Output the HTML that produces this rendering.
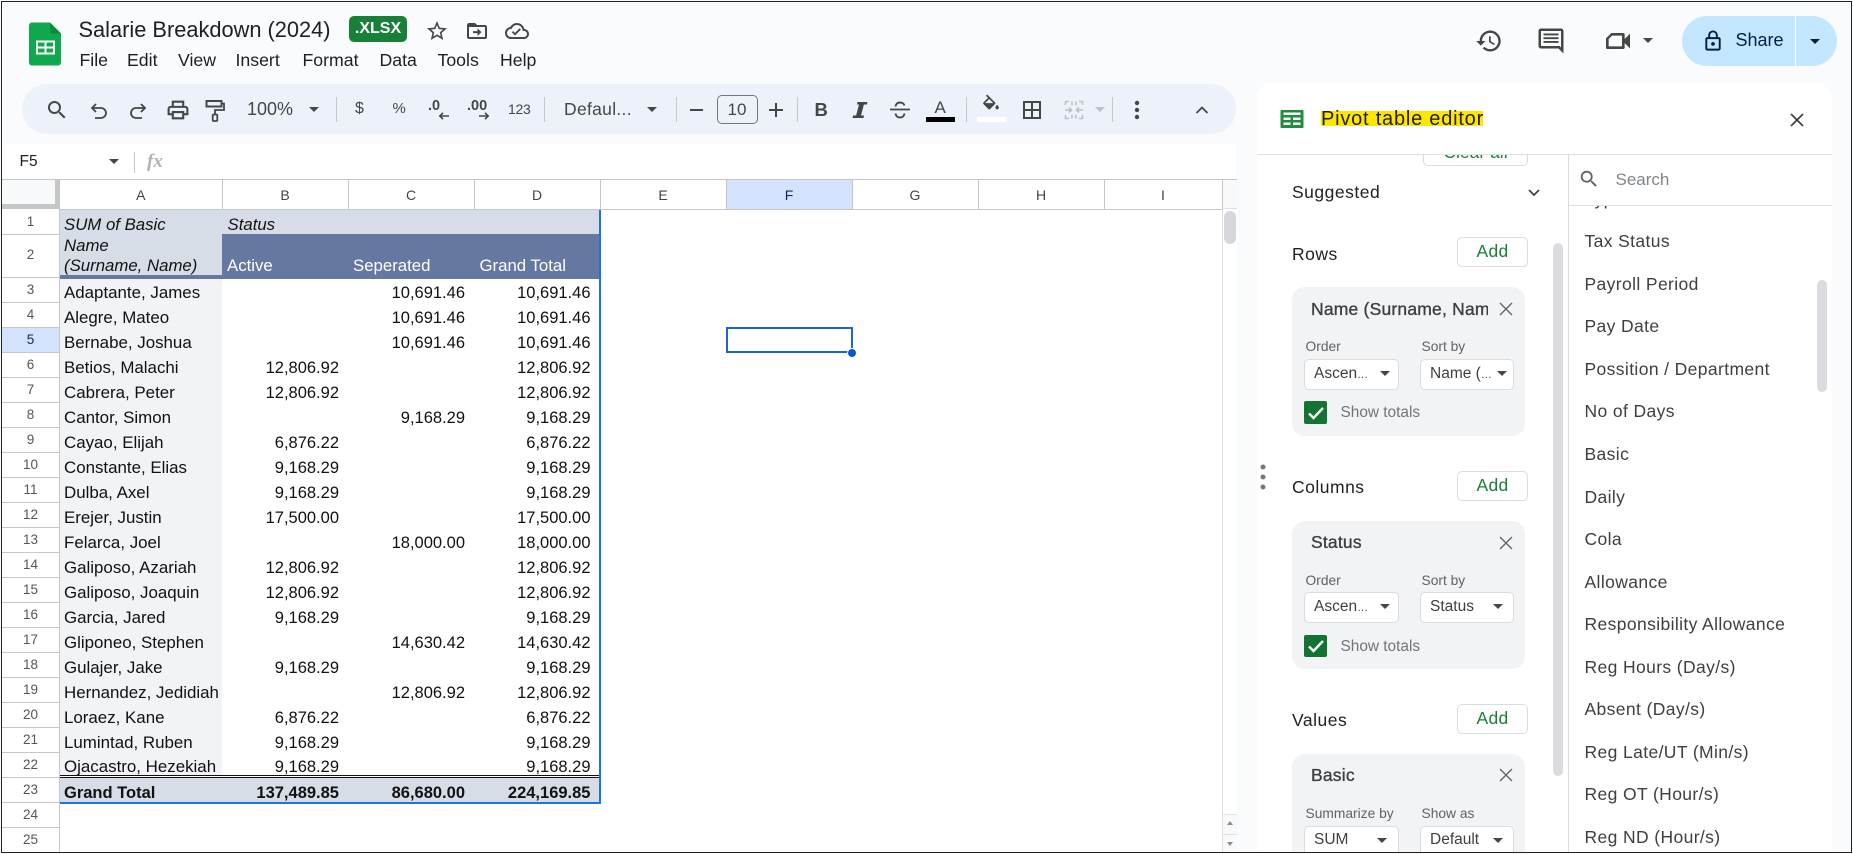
<!DOCTYPE html>
<html><head><meta charset="utf-8"><title>Salarie Breakdown (2024)</title>
<style>
*{box-sizing:border-box}
html,body{margin:0;padding:0;width:1853px;height:854px;overflow:hidden;background:#f9fbfd;font-family:"Liberation Sans",sans-serif;color:#1f1f1f}
.t{position:absolute;line-height:0;white-space:nowrap}
.box{position:absolute}
svg.i{position:absolute;transform:translate(-50%,-50%);fill:#444746;overflow:visible}
.m{font-size:17.7px;top:59.5px;color:#1f1f1f}
.tb{font-size:16.5px;top:109px;color:#444746}
.sep{position:absolute;width:1px;top:97px;height:25px;background:#c7c7c7}
.ch{position:absolute;top:179px;height:30.5px;border-right:1px solid #c7c7c7;border-top:1px solid #c7c7c7;border-bottom:1px solid #c7c7c7;text-align:center;font-size:14px;line-height:31px;color:#444}
.rn{position:absolute;left:2px;width:57px;border-bottom:1px solid #c7c7c7;text-align:center;font-size:13.5px;color:#555}
.rn span{display:block;position:relative;top:-1px}
.r{position:absolute;left:60px;width:540px;height:25px;font-size:16.5px;color:#111}
.r i{font-style:normal;position:absolute;top:15.4px;line-height:0;white-space:nowrap}
.r .a{left:4px;font-size:16.9px}.r .b{right:261px}.r .c{right:135px}.r .d{right:9.5px}
.add{position:absolute;left:1457px;width:71px;height:30px;background:#fff;border:1px solid #dadce0;border-radius:5px;color:#188038;font-size:17.5px;font-weight:500;text-align:center;line-height:26px;letter-spacing:.3px}
.sec{font-size:17.5px;left:1292px;color:#202124;letter-spacing:.5px}
.card{position:absolute;left:1292px;width:233px;background:#f1f3f4;border-radius:13px}
.ct{font-size:17.5px;left:1311px;color:#3c4043;-webkit-text-stroke:.35px #3c4043;letter-spacing:.2px}
.lb{font-size:13.8px;color:#5f6368}
.sel{position:absolute;height:31px;background:#fff;border:1px solid #dadce0;border-radius:5px}
.st{font-size:15.5px;color:#3c4043}
.st span{font-size:11px}
.ar{position:absolute;width:0;height:0;border-left:5.5px solid transparent;border-right:5.5px solid transparent;border-top:5.5px solid #444746}
.cb{position:absolute;left:1304px;width:23px;height:23px;background:#137333;border-radius:2px}
.li{font-size:17.5px;left:1584.5px;color:#3c4043;letter-spacing:.38px}
.hd{font-size:16.8px}
</style></head>
<body>

<!-- top bar -->
<svg class="i" style="left:44.5px;top:44px" width="32" height="43" viewBox="0 0 32 43"><path d="M3 0H21L32 11V40a3 3 0 0 1-3 3H3a3 3 0 0 1-3-3V3a3 3 0 0 1 3-3z" fill="#0fa84c"/><path d="M21 0L32 11H23a2 2 0 0 1-2-2z" fill="#0a8a3c"/><path d="M7 18h19v14H7z M9 20v4h6.500v-4z M17.500 20v4H24v-4z M9 26v4h6.500v-4z M17.500 26v4H24v-4z" fill="#fff" fill-rule="evenodd"/></svg>
<div class="t" style="left:78.5px;top:29.5px;font-size:21.8px;color:#1f1f1f">Salarie Breakdown (2024)</div>
<div class="box" style="left:349px;top:16px;width:58px;height:26px;background:#188038;border-radius:5px;color:#fff;font-size:16px;font-weight:bold;line-height:26px;text-align:center">.XLSX</div>
<svg class="i" style="left:437px;top:31px" width="24" height="24" viewBox="0 0 24 24"><path d="M22 9.240l-7.190-.62L12 2 9.190 8.630 2 9.240l5.460 4.730L5.820 21 12 17.270 18.180 21l-1.630-7.030L22 9.240zM12 15.400l-3.760 2.270 1-4.280-3.320-2.880 4.380-.38L12 6.100l1.710 4.040 4.380.38-3.320 2.880 1 4.280L12 15.400z"/></svg>
<svg class="i" style="left:477px;top:31px" width="24" height="24" viewBox="0 0 24 24"><path d="M20 6h-8l-2-2H4c-1.100 0-2 .9-2 2v12c0 1.100.9 2 2 2h16c1.100 0 2-.9 2-2V8c0-1.100-.9-2-2-2zm0 12H4V8h16v10z"/><path d="M12.500 17l4-3.900-4-3.900v2.900H8v2h4.500z"/></svg>
<svg class="i" style="left:517px;top:31px" width="24" height="24" viewBox="0 0 24 24"><path d="M19.350 10.040C18.670 6.590 15.640 4 12 4 9.110 4 6.600 5.640 5.350 8.040 2.340 8.360 0 10.910 0 14c0 3.310 2.690 6 6 6h13c2.760 0 5-2.240 5-5 0-2.640-2.050-4.780-4.650-4.960zM19 18H6c-2.210 0-4-1.790-4-4 0-2.050 1.530-3.760 3.560-3.970l1.070-.11.5-.95C8.080 7.140 9.940 6 12 6c2.620 0 4.880 1.860 5.390 4.430l.3 1.500 1.530.11c1.560.1 2.780 1.410 2.780 2.960 0 1.650-1.350 3-3 3z"/><path d="M10 16.500l-3.200-3.200 1.300-1.300 1.900 1.900 4.600-4.600 1.300 1.300z"/></svg>
<div class="t m" style="left:79.5px">File</div>
<div class="t m" style="left:127px">Edit</div>
<div class="t m" style="left:178px">View</div>
<div class="t m" style="left:235.5px">Insert</div>
<div class="t m" style="left:302.5px">Format</div>
<div class="t m" style="left:379.5px">Data</div>
<div class="t m" style="left:437.5px">Tools</div>
<div class="t m" style="left:500px">Help</div>

<svg class="i" style="left:1488.500px;top:40.500px" width="28" height="28" viewBox="0 0 24 24"><path d="M13 3c-4.970 0-9 4.030-9 9H1l3.890 3.890.07.14L9 12H6c0-3.870 3.130-7 7-7s7 3.130 7 7-3.130 7-7 7c-1.930 0-3.680-.79-4.940-2.060l-1.420 1.420C8.270 19.990 10.510 21 13 21c4.970 0 9-4.030 9-9s-4.030-9-9-9zm-1 5v5l4.280 2.540.72-1.210-3.500-2.080V8H12z"/></svg>
<svg class="i" style="left:1550.500px;top:41px" width="30" height="30" viewBox="0 0 24 24"><path d="M20 17.170L18.830 16H4V4h16v13.170zM20 2H4c-1.100 0-2 .9-2 2v12c0 1.100.9 2 2 2h14l4 4V4c0-1.100-.9-2-2-2z"/><path d="M6 12h12v1.500H6zM6 9h12v1.500H6zM6 6h12v1.500H6z"/></svg>
<svg class="i" style="left:1618px;top:41px" width="32" height="32" viewBox="0 0 24 24"><path d="M15 8v8H5V10.500L7.500 8h7.500m1-2H7L3 10v7c0 .55.45 1 1 1h12c.55 0 1-.45 1-1v-3.500l4 4v-11l-4 4V7c0-.55-.45-1-1-1z"/></svg>
<div class="ar" style="left:1643px;top:38px"></div>
<div class="box" style="left:1682px;top:16px;width:155px;height:50px;background:#c2e7ff;border-radius:25px"></div>
<div class="box" style="left:1795px;top:16px;width:1px;height:50px;background:#fff"></div>
<svg class="i" style="left:1713px;top:41px" width="23" height="23" viewBox="0 0 24 24"><path fill="#041e49" d="M18 8h-1V6c0-2.760-2.240-5-5-5S7 3.240 7 6v2H6c-1.100 0-2 .9-2 2v10c0 1.100.9 2 2 2h12c1.100 0 2-.9 2-2V10c0-1.100-.9-2-2-2zM9 6c0-1.660 1.340-3 3-3s3 1.340 3 3v2H9V6zm9 14H6V10h12v10zm-6-3c1.100 0 2-.9 2-2s-.9-2-2-2-2 .9-2 2 .9 2 2 2z"/></svg>
<div class="t" style="left:1735.500px;top:40px;font-size:18px;color:#041e49">Share</div>
<div class="ar" style="left:1810px;top:38.500px;border-top-color:#041e49"></div>

<!-- toolbar -->
<div class="box" style="left:22px;top:84px;width:1214px;height:50px;background:#edf2fa;border-radius:25px"></div>
<svg class="i" style="left:57px;top:110px" width="24" height="24" viewBox="0 0 24 24"><path d="M15.500 14h-.79l-.28-.27A6.471 6.471 0 0 0 16 9.500 6.500 6.500 0 1 0 9.500 16c1.610 0 3.090-.59 4.230-1.570l.27.28v.79l5 4.990L20.490 19l-4.990-5zm-6 0C7.010 14 5 11.990 5 9.500S7.010 5 9.500 5 14 7.010 14 9.500 11.990 14 9.500 14z"/></svg>
<svg class="i" style="left:98.500px;top:110.500px" width="20" height="20" viewBox="0 0 20 20"><path d="M7 3L3 7l4 4M3 7h9a4.500 4.500 0 0 1 0 10H6" fill="none" stroke="#444746" stroke-width="1.800"/></svg>
<svg class="i" style="left:137.500px;top:110.500px" width="20" height="20" viewBox="0 0 20 20"><path d="M13 3l4 4-4 4M17 7H8a4.500 4.500 0 0 0 0 10h6" fill="none" stroke="#444746" stroke-width="1.800"/></svg>
<svg class="i" style="left:177.500px;top:110px" width="25" height="25" viewBox="0 0 24 24"><path d="M19 8h-1V3H6v5H5c-1.660 0-3 1.340-3 3v6h4v4h12v-4h4v-6c0-1.660-1.340-3-3-3zM8 5h8v3H8V5zm8 12v2H8v-4h8v2zm2-2v-2H6v2H4v-4c0-.55.45-1 1-1h14c.55 0 1 .45 1 1v4h-2z"/></svg>
<svg class="i" style="left:215px;top:110.500px" width="20" height="22" viewBox="0 0 20 22"><rect x="1.500" y="1" width="15" height="5.500" fill="none" stroke="#444746" stroke-width="2"/><path d="M16.500 3.500h2.500v6.500H10v5" fill="none" stroke="#444746" stroke-width="1.800"/><rect x="7.700" y="14.500" width="4.600" height="6.500" rx="1" fill="none" stroke="#444746" stroke-width="1.800"/></svg>
<div class="t tb" style="left:247px;font-size:18px">100%</div>
<div class="ar" style="left:309px;top:107px"></div>
<div class="sep" style="left:336px"></div>
<div class="t tb" style="left:355px;font-size:16px">$</div>
<div class="t tb" style="left:392.500px;font-size:15px">%</div>
<div class="t" style="left:428px;top:106px;font-size:14.500px;font-weight:bold;color:#444746">.0</div>
<svg class="i" style="left:444px;top:116px" width="12" height="8" viewBox="0 0 12 8"><path d="M11 4H2M5 .8L1.800 4 5 7.200" fill="none" stroke="#444746" stroke-width="1.600"/></svg>
<div class="t" style="left:467px;top:106px;font-size:14.500px;font-weight:bold;color:#444746">.00</div>
<svg class="i" style="left:484px;top:116px" width="12" height="8" viewBox="0 0 12 8"><path d="M1 4h9M7 .8L10.200 4 7 7.200" fill="none" stroke="#444746" stroke-width="1.600"/></svg>
<div class="t tb" style="left:508px;font-size:14px;letter-spacing:-.3px">123</div>
<div class="sep" style="left:544px"></div>
<div class="t tb" style="left:564px;font-size:17.500px;letter-spacing:.3px">Defaul...</div>
<div class="ar" style="left:647px;top:107px"></div>
<div class="sep" style="left:676px"></div>
<div class="box" style="left:690px;top:108.500px;width:13px;height:2px;background:#444746"></div>
<div class="box" style="left:716.500px;top:94.500px;width:41px;height:29.500px;border:1px solid #747775;border-radius:5px;text-align:center;line-height:28px;font-size:17px;color:#444746">10</div>
<div class="box" style="left:769px;top:108.500px;width:14px;height:2px;background:#444746"></div>
<div class="box" style="left:775px;top:102.500px;width:2px;height:14px;background:#444746"></div>
<div class="sep" style="left:797px"></div>
<div class="t" style="left:814.500px;top:109.500px;font-size:18.500px;font-weight:bold;color:#444746">B</div>
<svg class="i" style="left:860px;top:109.500px" width="15" height="16" viewBox="0 0 15 16"><path d="M5 0h10l-.6 2.500h-3L8.500 13.500h3L11 16H0l.6-2.500h3L6.500 2.500h-2z"/></svg>
<svg class="i" style="left:900px;top:110px" width="22" height="20" viewBox="0 0 22 20"><path d="M6.500 6.500C7 3.500 9 2.500 11 2.500s4 1 4.500 3M6.500 13.500C7 16.500 9 17.500 11 17.500s4-1 4.500-4" fill="none" stroke="#444746" stroke-width="1.900"/><path d="M1 9.500h20" stroke="#444746" stroke-width="1.800"/></svg>
<div class="t" style="left:934.500px;top:107.500px;font-size:17px;color:#444746">A</div>
<div class="box" style="left:926px;top:117px;width:29px;height:5px;background:#000"></div>
<div class="sep" style="left:966px"></div>
<svg class="i" style="left:991px;top:104.500px" width="21" height="21" viewBox="0 0 24 24"><path d="M16.560 8.940L7.620 0 6.210 1.410l2.380 2.380-5.150 5.150c-.59.59-.59 1.540 0 2.120l5.500 5.500c.29.29.68.44 1.060.44s.77-.15 1.060-.44l5.500-5.500c.59-.58.59-1.530 0-2.120zM5.210 10L10 5.210 14.790 10H5.210zM19 11.500s-2 2.170-2 3.500c0 1.100.9 2 2 2s2-.9 2-2c0-1.330-2-3.500-2-3.500z"/><path d="M5 10h10l-5 5z"/></svg>
<div class="box" style="left:977px;top:117px;width:29px;height:5px;background:#fff"></div>
<svg class="i" style="left:1032px;top:110px" width="24" height="24" viewBox="0 0 24 24"><path d="M3 3v18h18V3H3zm8 16H5v-6h6v6zm0-8H5V5h6v6zm8 8h-6v-6h6v6zm0-8h-6V5h6v6z"/></svg>
<svg class="i" style="left:1074px;top:110px" width="20" height="20" viewBox="0 0 20 20"><path d="M5 1.500H1.500V5M1.500 15v3.500H5M15 1.500h3.500V5M18.500 15v3.500H15M1 10h6.500M5 7.500L7.500 10 5 12.500M19 10h-6.500M15 7.500L12.500 10l2.500 2.500M8 1.500v4M12 1.500v4M8 14.500v4M12 14.500v4" fill="none" stroke="#bdc1c6" stroke-width="1.600"/></svg>
<div class="ar" style="left:1094.500px;top:107px;border-top-color:#bdc1c6"></div>
<div class="sep" style="left:1112px"></div>
<svg class="i" style="left:1136.500px;top:109.700px" width="6" height="20" viewBox="0 0 6 20"><circle cx="3" cy="3" r="2.200"/><circle cx="3" cy="10" r="2.200"/><circle cx="3" cy="17" r="2.200"/></svg>
<svg class="i" style="left:1202px;top:110px" width="14" height="9" viewBox="0 0 14 9"><path d="M1.500 7.500L7 2l5.500 5.500" fill="none" stroke="#444746" stroke-width="1.800"/></svg>

<!-- formula bar -->
<div class="box" style="left:2px;top:144px;width:1234px;height:36px;background:#fff"></div>
<div class="t" style="left:19.500px;top:162px;font-size:15.500px;color:#1f1f1f">F5</div>
<div class="ar" style="left:108.500px;top:159px"></div>
<div class="box" style="left:134px;top:152px;width:1px;height:21px;background:#c7c7c7"></div>
<div class="t" style="left:147px;top:162px;font-size:19px;font-family:'Liberation Serif',serif;font-style:italic;font-weight:bold;color:#b0b3b6">fx</div>

<!-- grid -->
<div class="box" style="left:2px;top:179px;width:1235px;height:673px;background:#fff"></div>
<div class="box" style="left:2px;top:179px;width:53px;height:25px;background:#f8f9fa"></div>
<div class="box" style="left:2px;top:204px;width:58px;height:5px;background:#c4c7c5"></div>
<div class="box" style="left:55px;top:179px;width:5px;height:30px;background:#c4c7c5"></div>
<div class="box" style="left:2px;top:179px;width:1222px;height:1px;background:#c7c7c7"></div>

<div class="ch" style="left:60px;width:162.500px">A</div>
<div class="ch" style="left:222.500px;width:126px">B</div>
<div class="ch" style="left:348.500px;width:126px">C</div>
<div class="ch" style="left:474.500px;width:126px">D</div>
<div class="ch" style="left:600.500px;width:126px">E</div>
<div class="ch" style="left:726.500px;width:126px;background:#d3e3fd;color:#0b2b66">F</div>
<div class="ch" style="left:852.500px;width:126px">G</div>
<div class="ch" style="left:978.500px;width:126px">H</div>
<div class="ch" style="left:1104.500px;width:118px">I</div>
<div class="box" style="left:1223px;top:179px;width:14px;height:30px;background:#f8f9fa;border-top:1px solid #c7c7c7;border-bottom:1px solid #e0e0e0"></div>

<div class="box" style="left:59px;top:209px;width:1px;height:643px;background:#c7c7c7"></div>
<div class="rn" style="top:209.500px;height:25px;line-height:25px"><span>1</span></div>
<div class="rn" style="top:234.500px;height:43px;line-height:41px"><span>2</span></div>
<div class="rn" style="top:277.500px;height:25px;line-height:25px"><span>3</span></div>
<div class="rn" style="top:302.500px;height:25px;line-height:25px"><span>4</span></div>
<div class="rn" style="top:327.500px;height:25px;line-height:25px;background:#d3e3fd;color:#0b2b66"><span>5</span></div>
<div class="rn" style="top:352.500px;height:25px;line-height:25px"><span>6</span></div>
<div class="rn" style="top:377.500px;height:25px;line-height:25px"><span>7</span></div>
<div class="rn" style="top:402.500px;height:25px;line-height:25px"><span>8</span></div>
<div class="rn" style="top:427.500px;height:25px;line-height:25px"><span>9</span></div>
<div class="rn" style="top:452.500px;height:25px;line-height:25px"><span>10</span></div>
<div class="rn" style="top:477.500px;height:25px;line-height:25px"><span>11</span></div>
<div class="rn" style="top:502.500px;height:25px;line-height:25px"><span>12</span></div>
<div class="rn" style="top:527.500px;height:25px;line-height:25px"><span>13</span></div>
<div class="rn" style="top:552.500px;height:25px;line-height:25px"><span>14</span></div>
<div class="rn" style="top:577.500px;height:25px;line-height:25px"><span>15</span></div>
<div class="rn" style="top:602.500px;height:25px;line-height:25px"><span>16</span></div>
<div class="rn" style="top:627.500px;height:25px;line-height:25px"><span>17</span></div>
<div class="rn" style="top:652.500px;height:25px;line-height:25px"><span>18</span></div>
<div class="rn" style="top:677.500px;height:25px;line-height:25px"><span>19</span></div>
<div class="rn" style="top:702.500px;height:25px;line-height:25px"><span>20</span></div>
<div class="rn" style="top:727.500px;height:25px;line-height:25px"><span>21</span></div>
<div class="rn" style="top:752.500px;height:25px;line-height:25px"><span>22</span></div>
<div class="rn" style="top:777.500px;height:25px;line-height:25px"><span>23</span></div>
<div class="rn" style="top:802.500px;height:25px;line-height:25px"><span>24</span></div>
<div class="rn" style="top:827.500px;height:24.500px;line-height:25px;border-bottom:none"><span>25</span></div>

<!-- pivot fills -->
<div class="box" style="left:60px;top:210px;width:540px;height:24.500px;background:#d7dde7"></div>
<div class="box" style="left:60px;top:234px;width:162px;height:41px;background:#d7dde7"></div>
<div class="box" style="left:60px;top:275px;width:162px;height:4px;background:#6578a1"></div>
<div class="box" style="left:222px;top:234px;width:378px;height:45px;background:#6578a1"></div>
<div class="box" style="left:60px;top:279px;width:162px;height:496px;background:#f1f3f7"></div>
<div class="box" style="left:60px;top:778px;width:540px;height:24px;background:#d7dde7"></div>
<div class="box" style="left:60px;top:775px;width:540px;height:1px;background:#111"></div>
<div class="box" style="left:60px;top:777px;width:540px;height:1px;background:#111"></div>

<div class="t hd" style="left:64px;top:225.300px;font-style:italic;color:#111">SUM of Basic</div>
<div class="t hd" style="left:227.500px;top:225.300px;font-style:italic;color:#111">Status</div>
<div class="t hd" style="left:64px;top:246.300px;font-style:italic;color:#111">Name</div>
<div class="t hd" style="left:64px;top:266.300px;font-style:italic;color:#111">(Surname, Name)</div>
<div class="t hd" style="left:227px;top:266.300px;color:#fff">Active</div>
<div class="t hd" style="left:353px;top:266.300px;color:#fff">Seperated</div>
<div class="t hd" style="left:479.500px;top:266.300px;color:#fff">Grand Total</div>

<div class="r" style="top:277.300px"><i class="a">Adaptante, James</i><i class="c">10,691.46</i><i class="d">10,691.46</i></div>
<div class="r" style="top:302.300px"><i class="a">Alegre, Mateo</i><i class="c">10,691.46</i><i class="d">10,691.46</i></div>
<div class="r" style="top:327.300px"><i class="a">Bernabe, Joshua</i><i class="c">10,691.46</i><i class="d">10,691.46</i></div>
<div class="r" style="top:352.300px"><i class="a">Betios, Malachi</i><i class="b">12,806.92</i><i class="d">12,806.92</i></div>
<div class="r" style="top:377.300px"><i class="a">Cabrera, Peter</i><i class="b">12,806.92</i><i class="d">12,806.92</i></div>
<div class="r" style="top:402.300px"><i class="a">Cantor, Simon</i><i class="c">9,168.29</i><i class="d">9,168.29</i></div>
<div class="r" style="top:427.300px"><i class="a">Cayao, Elijah</i><i class="b">6,876.22</i><i class="d">6,876.22</i></div>
<div class="r" style="top:452.300px"><i class="a">Constante, Elias</i><i class="b">9,168.29</i><i class="d">9,168.29</i></div>
<div class="r" style="top:477.300px"><i class="a">Dulba, Axel</i><i class="b">9,168.29</i><i class="d">9,168.29</i></div>
<div class="r" style="top:502.300px"><i class="a">Erejer, Justin</i><i class="b">17,500.00</i><i class="d">17,500.00</i></div>
<div class="r" style="top:527.300px"><i class="a">Felarca, Joel</i><i class="c">18,000.00</i><i class="d">18,000.00</i></div>
<div class="r" style="top:552.300px"><i class="a">Galiposo, Azariah</i><i class="b">12,806.92</i><i class="d">12,806.92</i></div>
<div class="r" style="top:577.300px"><i class="a">Galiposo, Joaquin</i><i class="b">12,806.92</i><i class="d">12,806.92</i></div>
<div class="r" style="top:602.300px"><i class="a">Garcia, Jared</i><i class="b">9,168.29</i><i class="d">9,168.29</i></div>
<div class="r" style="top:627.300px"><i class="a">Gliponeo, Stephen</i><i class="c">14,630.42</i><i class="d">14,630.42</i></div>
<div class="r" style="top:652.300px"><i class="a">Gulajer, Jake</i><i class="b">9,168.29</i><i class="d">9,168.29</i></div>
<div class="r" style="top:677.300px"><i class="a">Hernandez, Jedidiah</i><i class="c">12,806.92</i><i class="d">12,806.92</i></div>
<div class="r" style="top:702.300px"><i class="a">Loraez, Kane</i><i class="b">6,876.22</i><i class="d">6,876.22</i></div>
<div class="r" style="top:727.300px"><i class="a">Lumintad, Ruben</i><i class="b">9,168.29</i><i class="d">9,168.29</i></div>
<div class="r" style="top:751.300px"><i class="a">Ojacastro, Hezekiah</i><i class="b">9,168.29</i><i class="d">9,168.29</i></div>
<div class="r" style="top:777.300px;font-weight:bold"><i class="a" style="font-size:16.500px">Grand Total</i><i class="b">137,489.85</i><i class="c">86,680.00</i><i class="d">224,169.85</i></div>

<!-- selection -->
<div class="box" style="left:599px;top:210px;width:2px;height:594px;background:#1a73e8"></div>
<div class="box" style="left:60px;top:802px;width:541px;height:2px;background:#1a73e8"></div>
<div class="box" style="left:726px;top:327px;width:126.500px;height:26px;border:2px solid #1a66d4"></div>
<div class="box" style="left:847px;top:348px;width:10px;height:10px;border-radius:50%;background:#0b57d0;border:1px solid #fff"></div>

<!-- sheet scrollbar -->
<div class="box" style="left:1222px;top:209px;width:1px;height:643px;background:#e0e0e0"></div>
<div class="box" style="left:1224px;top:211px;width:12px;height:33px;border-radius:6px;background:#d5d7dc"></div>
<div class="box" style="left:1223px;top:814px;width:14px;height:38px;background:#f8f9fa;border-top:1px solid #e4e4e4"></div>
<div class="box" style="left:1223px;top:834px;width:14px;height:1px;background:#e0e0e0"></div>
<div class="box" style="left:1226.500px;top:821px;width:0;height:0;border-left:3.500px solid transparent;border-right:3.500px solid transparent;border-bottom:4px solid #8a8a8a"></div>
<div class="box" style="left:1226.500px;top:842px;width:0;height:0;border-left:3.500px solid transparent;border-right:3.500px solid transparent;border-top:4px solid #8a8a8a"></div>

<!-- side panel -->
<div class="box" style="left:1256.500px;top:83px;width:575px;height:769px;background:#fff;border-radius:16px 16px 0 0"></div>
<svg class="i" style="left:1292px;top:119px" width="23" height="18" viewBox="0 0 23 18"><rect width="23" height="18" rx="1" fill="#1e8e3e"/><path d="M3 2.500h17v2.500H3zM3 7.500h7v2.500H3zM12.500 7.500H20v2.500h-7.500zM3 12.500h7v2.500H3zM12.500 12.500H20v2.500h-7.500z" fill="#fff"/></svg>
<div class="box" style="left:1321px;top:110.500px;width:162px;height:15px;background:#ffe600"></div>
<div class="t" style="left:1321px;top:118.500px;font-size:20px;letter-spacing:.78px;color:#1f1f1f">Pivot table editor</div>
<svg class="i" style="left:1797px;top:120px" width="14" height="14" viewBox="0 0 14 14"><path d="M1 1l12 12M13 1L1 13" stroke="#3c4043" stroke-width="1.700"/></svg>
<div class="box" style="left:1256.500px;top:154px;width:575px;height:1px;background:#e0e0e0"></div>
<div class="box" style="left:1568px;top:155px;width:1px;height:697px;background:#dadce0"></div>
<div class="box" style="left:1569px;top:205px;width:262.500px;height:1px;background:#e0e0e0"></div>

<!-- left panel column -->
<div class="box" style="left:1423px;top:155px;width:105px;height:11px;overflow:hidden">
  <div class="box" style="left:0;top:-20px;width:105px;height:31px;border:1px solid #dadce0;border-radius:5px;background:#fff;text-align:center;color:#188038;font-size:17.500px;line-height:32px">Clear all</div>
</div>
<div class="t sec" style="top:192px">Suggested</div>
<svg class="i" style="left:1534px;top:193px" width="12" height="8" viewBox="0 0 12 8"><path d="M1 1l5 5 5-5" fill="none" stroke="#3c4043" stroke-width="1.700"/></svg>

<div class="t sec" style="top:253.500px">Rows</div>
<div class="add" style="top:237px">Add</div>
<div class="card" style="top:287px;height:149px"></div>
<div class="box" style="left:1311px;top:297.500px;width:177px;height:22px;overflow:hidden"><div class="t ct" style="left:0;top:11px">Name (Surname, Name)</div></div>
<svg class="i" style="left:1505.700px;top:309px" width="14" height="14" viewBox="0 0 14 14"><path d="M1 1l12 12M13 1L1 13" stroke="#5f6368" stroke-width="1.300"/></svg>
<div class="t lb" style="left:1305.500px;top:346.500px">Order</div>
<div class="t lb" style="left:1421.500px;top:346.500px">Sort by</div>
<div class="sel" style="left:1303.500px;top:358.500px;width:95px"></div>
<div class="sel" style="left:1419.500px;top:358.500px;width:94px"></div>
<div class="t st" style="left:1314px;top:374px">Ascen<span>…</span></div>
<div class="t st" style="left:1430px;top:374px">Name (<span>…</span></div>
<div class="ar" style="left:1380px;top:371px"></div>
<div class="ar" style="left:1497px;top:371px"></div>
<div class="cb" style="top:401px"></div>
<svg class="i" style="left:1315.500px;top:412.500px" width="17" height="14" viewBox="0 0 17 14"><path d="M1.500 7.500l4.500 4.500 9.500-10" fill="none" stroke="#fff" stroke-width="2.400"/></svg>
<div class="t lb" style="left:1340.500px;top:413px;color:#70757a;font-size:15.400px">Show totals</div>

<div class="t sec" style="top:487px">Columns</div>
<div class="add" style="top:470.500px">Add</div>
<div class="card" style="top:521px;height:148px"></div>
<div class="t ct" style="top:541.500px">Status</div>
<svg class="i" style="left:1505.700px;top:543px" width="14" height="14" viewBox="0 0 14 14"><path d="M1 1l12 12M13 1L1 13" stroke="#5f6368" stroke-width="1.300"/></svg>
<div class="t lb" style="left:1305.500px;top:580.500px">Order</div>
<div class="t lb" style="left:1421.500px;top:580.500px">Sort by</div>
<div class="sel" style="left:1303.500px;top:591.500px;width:95px"></div>
<div class="sel" style="left:1419.500px;top:591.500px;width:94px"></div>
<div class="t st" style="left:1314px;top:607px">Ascen<span>…</span></div>
<div class="t st" style="left:1430px;top:607px">Status</div>
<div class="ar" style="left:1380px;top:604px"></div>
<div class="ar" style="left:1493px;top:604px"></div>
<div class="cb" style="top:635px;height:22px"></div>
<svg class="i" style="left:1315.500px;top:646px" width="17" height="14" viewBox="0 0 17 14"><path d="M1.500 7.500l4.500 4.500 9.500-10" fill="none" stroke="#fff" stroke-width="2.400"/></svg>
<div class="t lb" style="left:1340.500px;top:646.500px;color:#70757a;font-size:15.400px">Show totals</div>

<div class="t sec" style="top:720px">Values</div>
<div class="add" style="top:703.500px">Add</div>
<div class="card" style="top:754px;height:98px;border-radius:13px 13px 0 0"></div>
<div class="t ct" style="top:774.500px">Basic</div>
<svg class="i" style="left:1505.700px;top:775px" width="14" height="14" viewBox="0 0 14 14"><path d="M1 1l12 12M13 1L1 13" stroke="#5f6368" stroke-width="1.300"/></svg>
<div class="t lb" style="left:1305.500px;top:813.500px">Summarize by</div>
<div class="t lb" style="left:1421.500px;top:813.500px">Show as</div>
<div class="sel" style="left:1303.500px;top:825.500px;width:95px;height:27px;border-bottom:none;border-radius:5px 5px 0 0"></div>
<div class="sel" style="left:1419.500px;top:825.500px;width:94px;height:27px;border-bottom:none;border-radius:5px 5px 0 0"></div>
<div class="t st" style="left:1314px;top:840px">SUM</div>
<div class="t st" style="left:1430px;top:840px">Default</div>
<div class="ar" style="left:1377px;top:837.500px"></div>
<div class="ar" style="left:1493px;top:837.500px"></div>

<!-- panel scrollbar, drag dots -->
<div class="box" style="left:1553px;top:243px;width:10px;height:533px;border-radius:5px;background:#dadce0"></div>
<svg class="i" style="left:1262.500px;top:476.500px" width="6" height="26" viewBox="0 0 6 26"><circle cx="3" cy="3" r="2.500" fill="#777"/><circle cx="3" cy="13" r="2.500" fill="#777"/><circle cx="3" cy="23" r="2.500" fill="#777"/></svg>

<!-- field list -->
<svg class="i" style="left:1589px;top:179px" width="22" height="22" viewBox="0 0 24 24"><path fill="#5f6368" d="M15.500 14h-.79l-.28-.27A6.471 6.471 0 0 0 16 9.500 6.500 6.500 0 1 0 9.500 16c1.610 0 3.090-.59 4.230-1.570l.27.28v.79l5 4.990L20.490 19l-4.990-5zm-6 0C7.010 14 5 11.990 5 9.500S7.010 5 9.500 5 14 7.010 14 9.500 11.990 14 9.500 14z"/></svg>
<div class="t" style="left:1615.500px;top:179.500px;font-size:17px;color:#80868b">Search</div>
<div class="box" style="left:1569px;top:206px;width:262px;height:10px;overflow:hidden"><div class="t li" style="left:15.500px;top:-7px">Type</div></div>
<div class="t li" style="top:241px">Tax Status</div>
<div class="t li" style="top:284px">Payroll Period</div>
<div class="t li" style="top:326px">Pay Date</div>
<div class="t li" style="top:369px">Possition / Department</div>
<div class="t li" style="top:411px">No of Days</div>
<div class="t li" style="top:454px">Basic</div>
<div class="t li" style="top:496.500px">Daily</div>
<div class="t li" style="top:539px">Cola</div>
<div class="t li" style="top:581.500px">Allowance</div>
<div class="t li" style="top:624px">Responsibility Allowance</div>
<div class="t li" style="top:666.500px">Reg Hours (Day/s)</div>
<div class="t li" style="top:709px">Absent (Day/s)</div>
<div class="t li" style="top:751.500px">Reg Late/UT (Min/s)</div>
<div class="t li" style="top:794px">Reg OT (Hour/s)</div>
<div class="t li" style="top:836.500px">Reg ND (Hour/s)</div>
<div class="box" style="left:1817px;top:280px;width:10px;height:112px;border-radius:5px;background:#dadce0"></div>

<!-- frame -->
<div class="box" style="left:1px;top:1px;right:1px;bottom:1px;border:1.500px solid #222"></div>
</body></html>
